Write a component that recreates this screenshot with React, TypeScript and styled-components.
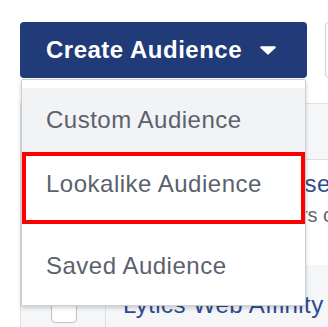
import React from "react";
import styled, { createGlobalStyle } from "styled-components";

const Global = createGlobalStyle`
  html, body { margin: 0; padding: 0; background: #fff; }
  body { font-family: "Liberation Sans", Arial, Helvetica, sans-serif; overflow: hidden; }
  * { box-sizing: border-box; }
`;

const Page = styled.div`
  position: relative;
  width: 328px;
  height: 327px;
  overflow: hidden;
  padding: 22px 0 0 20px;
`;

const Toolbar = styled.div`
  display: flex;
  gap: 18px;
  height: 56px;
`;

const Anchor = styled.div`
  position: relative;
  z-index: 2;
`;

const PrimaryButton = styled.button`
  display: flex;
  align-items: center;
  gap: 18px;
  width: 287px;
  height: 56px;
  padding: 0 0 0 26px;
  border: none;
  border-radius: 4px;
  background: #213b78;
  color: #fff;
  font-family: inherit;
  font-size: 24px;
  font-weight: 700;
  letter-spacing: 0.5px;
  cursor: pointer;
`;

const SecondaryButton = styled.button`
  width: 140px;
  height: 56px;
  border: 1px solid #ccd0d5;
  border-radius: 4px;
  background: #fff;
  flex: none;
`;

const Menu = styled.div`
  position: absolute;
  top: 57px;
  left: 1px;
  width: 285px;
  height: 227px;
  padding: 8px 0 0;
  background: #fff;
  border: 1px solid #ccd0d5;
  border-radius: 2px;
  box-shadow: 0 2px 4px rgba(0, 0, 0, 0.18);
`;

const MenuItem = styled.div<{ $active?: boolean; $spaced?: boolean; $marked?: boolean }>`
  position: relative;
  display: flex;
  align-items: center;
  height: 64px;
  margin-top: ${(p) => (p.$spaced ? "18px" : "0")};
  padding-left: 24px;
  background: ${(p) => (p.$active ? "#f2f3f5" : "#fff")};
  color: #5b616d;
  font-size: 24px;
  letter-spacing: 0.5px;

  ${(p) =>
    p.$marked &&
    `
    &::after {
      content: "";
      position: absolute;
      top: 0;
      left: 0;
      right: 0;
      bottom: -8px;
      border: 4px solid #f00;
    }
  `}
`;

const Table = styled.div`
  margin-top: 25px;
  width: 420px;
  border-left: 1px solid #dddfe2;
`;

const HeaderRow = styled.div`
  display: grid;
  grid-template-columns: 85px 1fr;
  height: 57px;
  background: #f5f6f7;
  border-top: 1px solid #dddfe2;
  border-bottom: 1px solid #dddfe2;
`;

const Row = styled.div<{ $shaded?: boolean; $height: number }>`
  display: grid;
  grid-template-columns: 85px 1fr;
  height: ${(p) => p.$height}px;
  background: ${(p) => (p.$shaded ? "#f5f6f7" : "#fff")};
`;

const CheckCell = styled.div<{ $top: number }>`
  padding: ${(p) => p.$top}px 0 0 30px;
  border-right: 1px solid #dddfe2;
`;

const Checkbox = styled.div`
  width: 26px;
  height: 26px;
  background: #fff;
  border: 1px solid #bec3c9;
  border-radius: 4px;
`;

const NameCell = styled.div<{ $top: number }>`
  padding: ${(p) => p.$top}px 0 0 17px;
  white-space: nowrap;
`;

const Name = styled.div`
  color: #2d4b8e;
  font-size: 24px;
  line-height: 28px;
  letter-spacing: 0.4px;
`;

const Sub = styled.div`
  margin-top: 4px;
  color: #606770;
  font-size: 20px;
  line-height: 26px;
`;

const Caret = () => (
  <svg width="16" height="9" viewBox="0 0 16 9" aria-hidden="true">
    <path d="M1.2 0.3 H14.8 a1 1 0 0 1 0.7 1.7 L8.7 8.3 a1 1 0 0 1 -1.4 0 L0.5 2 A1 1 0 0 1 1.2 0.3Z" fill="#fff" />
  </svg>
);

export default function App() {
  return (
    <>
      <Global />
      <Page>
        <Toolbar>
          <Anchor>
            <PrimaryButton>
              Create Audience
              <Caret />
            </PrimaryButton>
            <Menu>
              <MenuItem $active>Custom Audience</MenuItem>
              <MenuItem $marked>Lookalike Audience</MenuItem>
              <MenuItem $spaced>Saved Audience</MenuItem>
            </Menu>
          </Anchor>
          <SecondaryButton />
        </Toolbar>
        <Table>
          <HeaderRow>
            <CheckCell $top={0} />
            <div />
          </HeaderRow>
          <Row $height={105}>
            <CheckCell $top={32}>
              <Checkbox />
            </CheckCell>
            <NameCell $top={10}>
              <Name>Lytics Passive Users</Name>
              <Sub>Lookalike of top users created by Lytics</Sub>
            </NameCell>
          </Row>
          <Row $shaded $height={80}>
            <CheckCell $top={32}>
              <Checkbox />
            </CheckCell>
            <NameCell $top={26}>
              <Name>Lytics Web Affinity</Name>
            </NameCell>
          </Row>
        </Table>
      </Page>
    </>
  );
}
